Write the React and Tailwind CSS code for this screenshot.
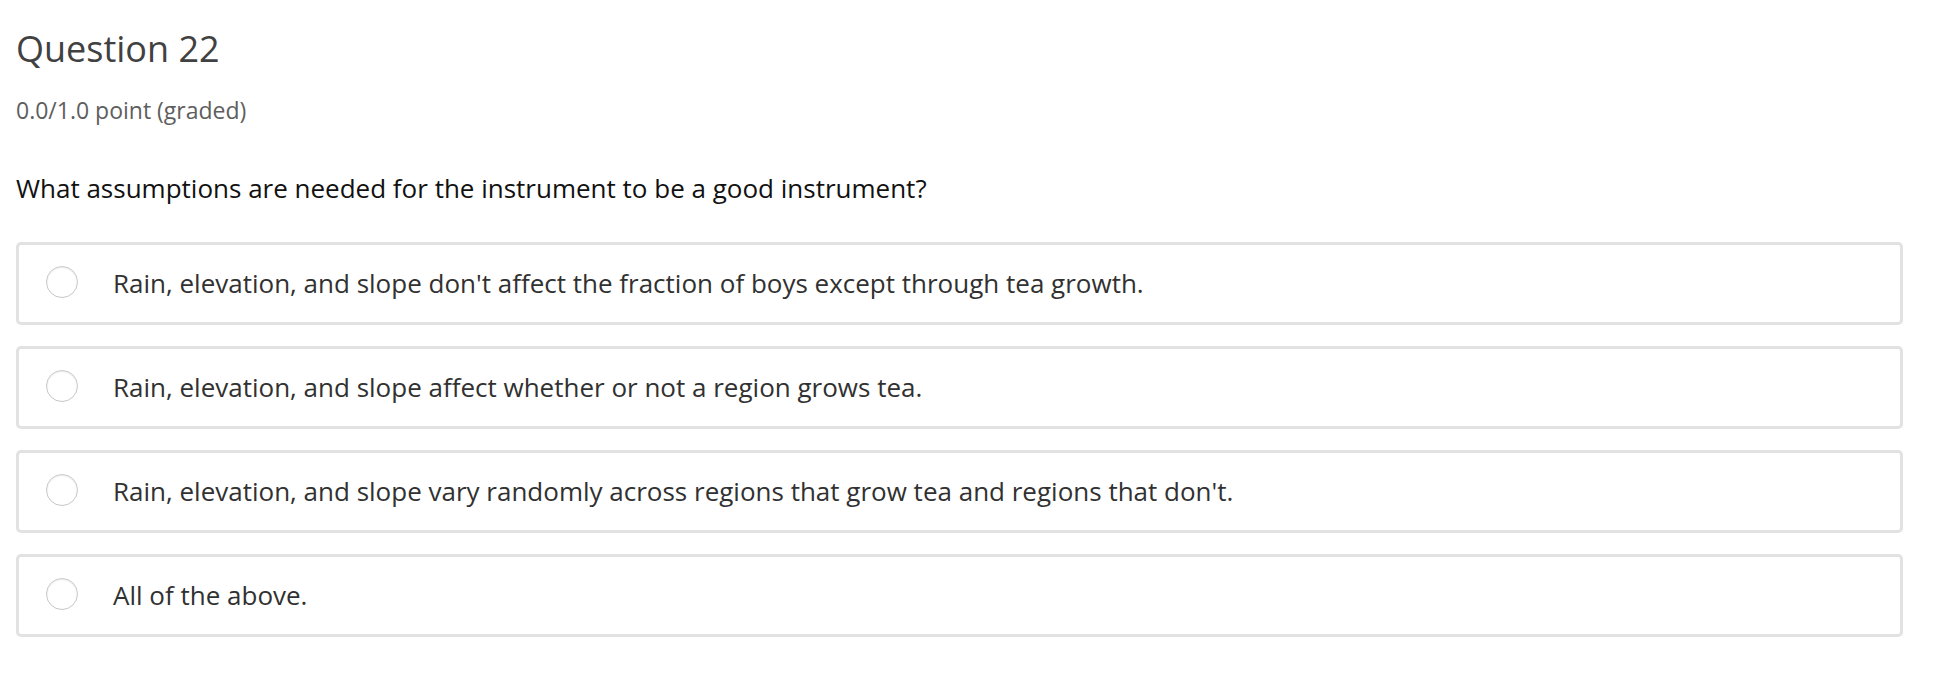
import React from 'react';

const options = [
  "Rain, elevation, and slope don't affect the fraction of boys except through tea growth.",
  'Rain, elevation, and slope affect whether or not a region grows tea.',
  "Rain, elevation, and slope vary randomly across regions that grow tea and regions that don't.",
  'All of the above.',
];

const App = () => {
  return (
    <div className="min-h-screen bg-white pl-[16px] pr-[43px] pt-[24px] font-['Open_Sans',sans-serif]">
      <h2 className="text-[36px] leading-[50px] text-[#414141] font-normal">Question 22</h2>
      <div className="mt-[21px] text-[23px] leading-[30px] text-[#5e5e5e]">0.0/1.0 point (graded)</div>

      <p className="mt-[45px] text-[26px] leading-[36px] text-[#111]">
        What assumptions are needed for the instrument to be a good instrument?
      </p>

      <div className="mt-[36px] flex flex-col gap-[21px]">
        {options.map((opt) => (
          <label
            key={opt}
            className="flex items-center h-[83px] border-[3px] border-[#e2e2e2] rounded-[5px] pl-[27px] cursor-pointer"
          >
            <span className="w-[32px] h-[32px] rounded-full border border-[#c8c8c8] bg-white shadow-[inset_0_1px_2px_rgba(0,0,0,0.08)] -mt-[4px] shrink-0" />
            <span className="ml-[35px] text-[26px] text-[#313131]">{opt}</span>
          </label>
        ))}
      </div>
    </div>
  );
};

export default App;
